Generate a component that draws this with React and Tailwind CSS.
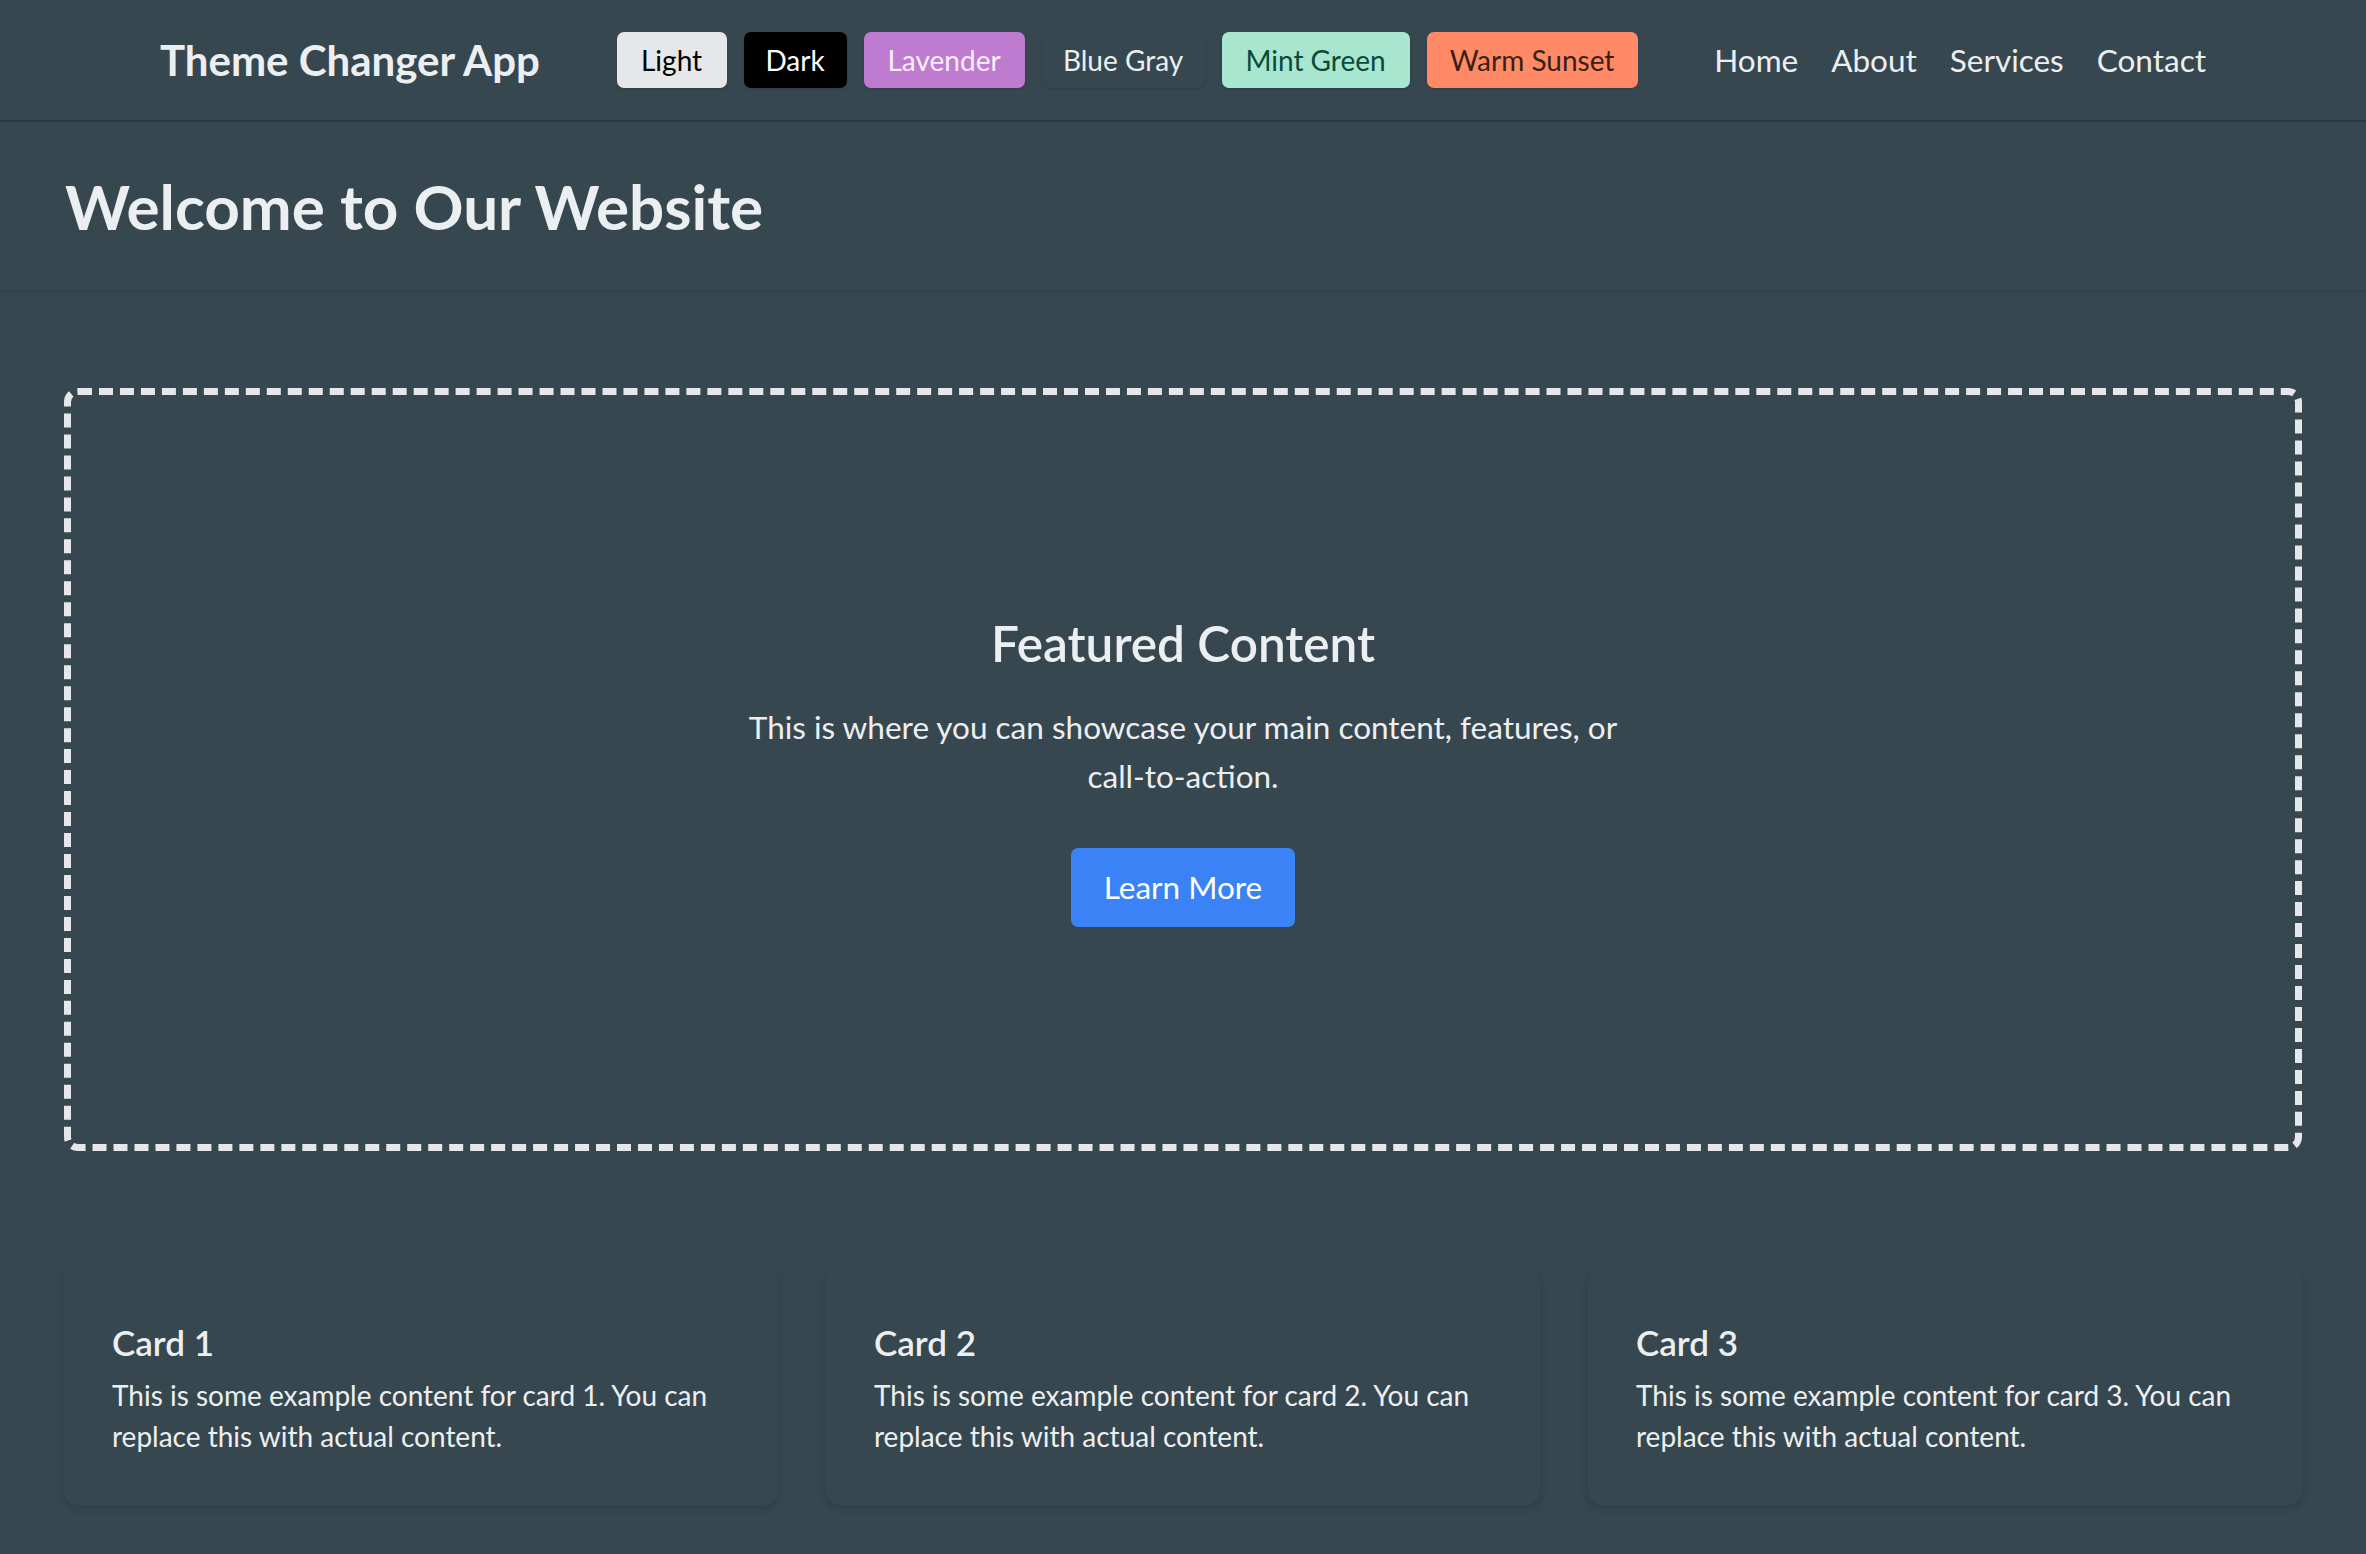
import React from "react";

const themes = [
  { name: "Light", cls: "w-[110px] bg-[#e5e7eb] text-black" },
  { name: "Dark", cls: "w-[103px] bg-black text-white" },
  { name: "Lavender", cls: "w-[161px] bg-[#bf7bcf] text-[#f8eefa]" },
  { name: "Blue Gray", cls: "w-[163px] bg-[#37474f] text-[#eceff1] shadow-[0_1px_4px_rgba(0,0,0,0.35)]" },
  { name: "Mint Green", cls: "w-[188px] bg-[#a8e6cf] text-[#0b4a3a]" },
  { name: "Warm Sunset", cls: "w-[211px] bg-[#ff8a65] text-[#3b1f17]" },
];

const links = ["Home", "About", "Services", "Contact"];

const cards = [1, 2, 3];

const App = () => {
  return (
    <div className="min-h-screen bg-[#37474f] text-[#eceff1] font-['Lato',sans-serif]">
      {/* Top bar */}
      <header className="h-[122px] flex items-center justify-between px-[160px] border-b-2 border-[#2e3b42]">
        <h1 className="text-[42px] leading-[56px] font-bold">Theme Changer App</h1>

        <div className="flex items-center gap-[17px]">
          {themes.map((t) => (
            <button
              key={t.name}
              className={`h-[56px] rounded-[7px] text-[28px] leading-[42px] flex items-center justify-center shadow-sm ${t.cls}`}
            >
              {t.name}
            </button>
          ))}
        </div>

        <nav className="flex items-center gap-[33px] text-[31.5px] leading-[49px]">
          {links.map((l) => (
            <a key={l} href="#" className="hover:underline">
              {l}
            </a>
          ))}
        </nav>
      </header>

      {/* Page heading */}
      <section className="px-[65px] py-[49px] shadow-[0_2px_3px_rgba(0,0,0,0.12)]">
        <h2 className="text-[62px] leading-[70px] font-bold">Welcome to Our Website</h2>
      </section>

      <main className="px-[64px] pt-[98px] pb-[48px]">
        {/* Featured block */}
        <div className="h-[763px] border-[7px] border-dashed border-[#e5e7eb] rounded-[14px] flex flex-col items-center justify-center text-center">
          <h3 className="text-[49.5px] leading-[63px] font-semibold mb-[28px]">Featured Content</h3>
          <p className="text-[31.5px] leading-[49px] max-w-[880px] mb-[47px]">
            This is where you can showcase your main content, features, or call-to-action.
          </p>
          <button className="h-[79px] px-[33px] bg-[#3b82f6] text-white text-[31.5px] leading-[49px] rounded-[7px]">
            Learn More
          </button>
        </div>

        {/* Cards */}
        <div className="grid grid-cols-3 gap-[48px] mt-[115px]">
          {cards.map((n) => (
            <div
              key={n}
              className="rounded-[14px] bg-[#37474f] shadow-[0_4px_10px_rgba(0,0,0,0.12)] px-[48px] pt-[52px] pb-[48px]"
            >
              <h4 className="text-[35px] leading-[49px] font-semibold mb-[8px]">{`Card ${n}`}</h4>
              <p className="text-[28px] leading-[41px]">
                {`This is some example content for card ${n}. You can replace this with actual content.`}
              </p>
            </div>
          ))}
        </div>
      </main>
    </div>
  );
};

export default App;
